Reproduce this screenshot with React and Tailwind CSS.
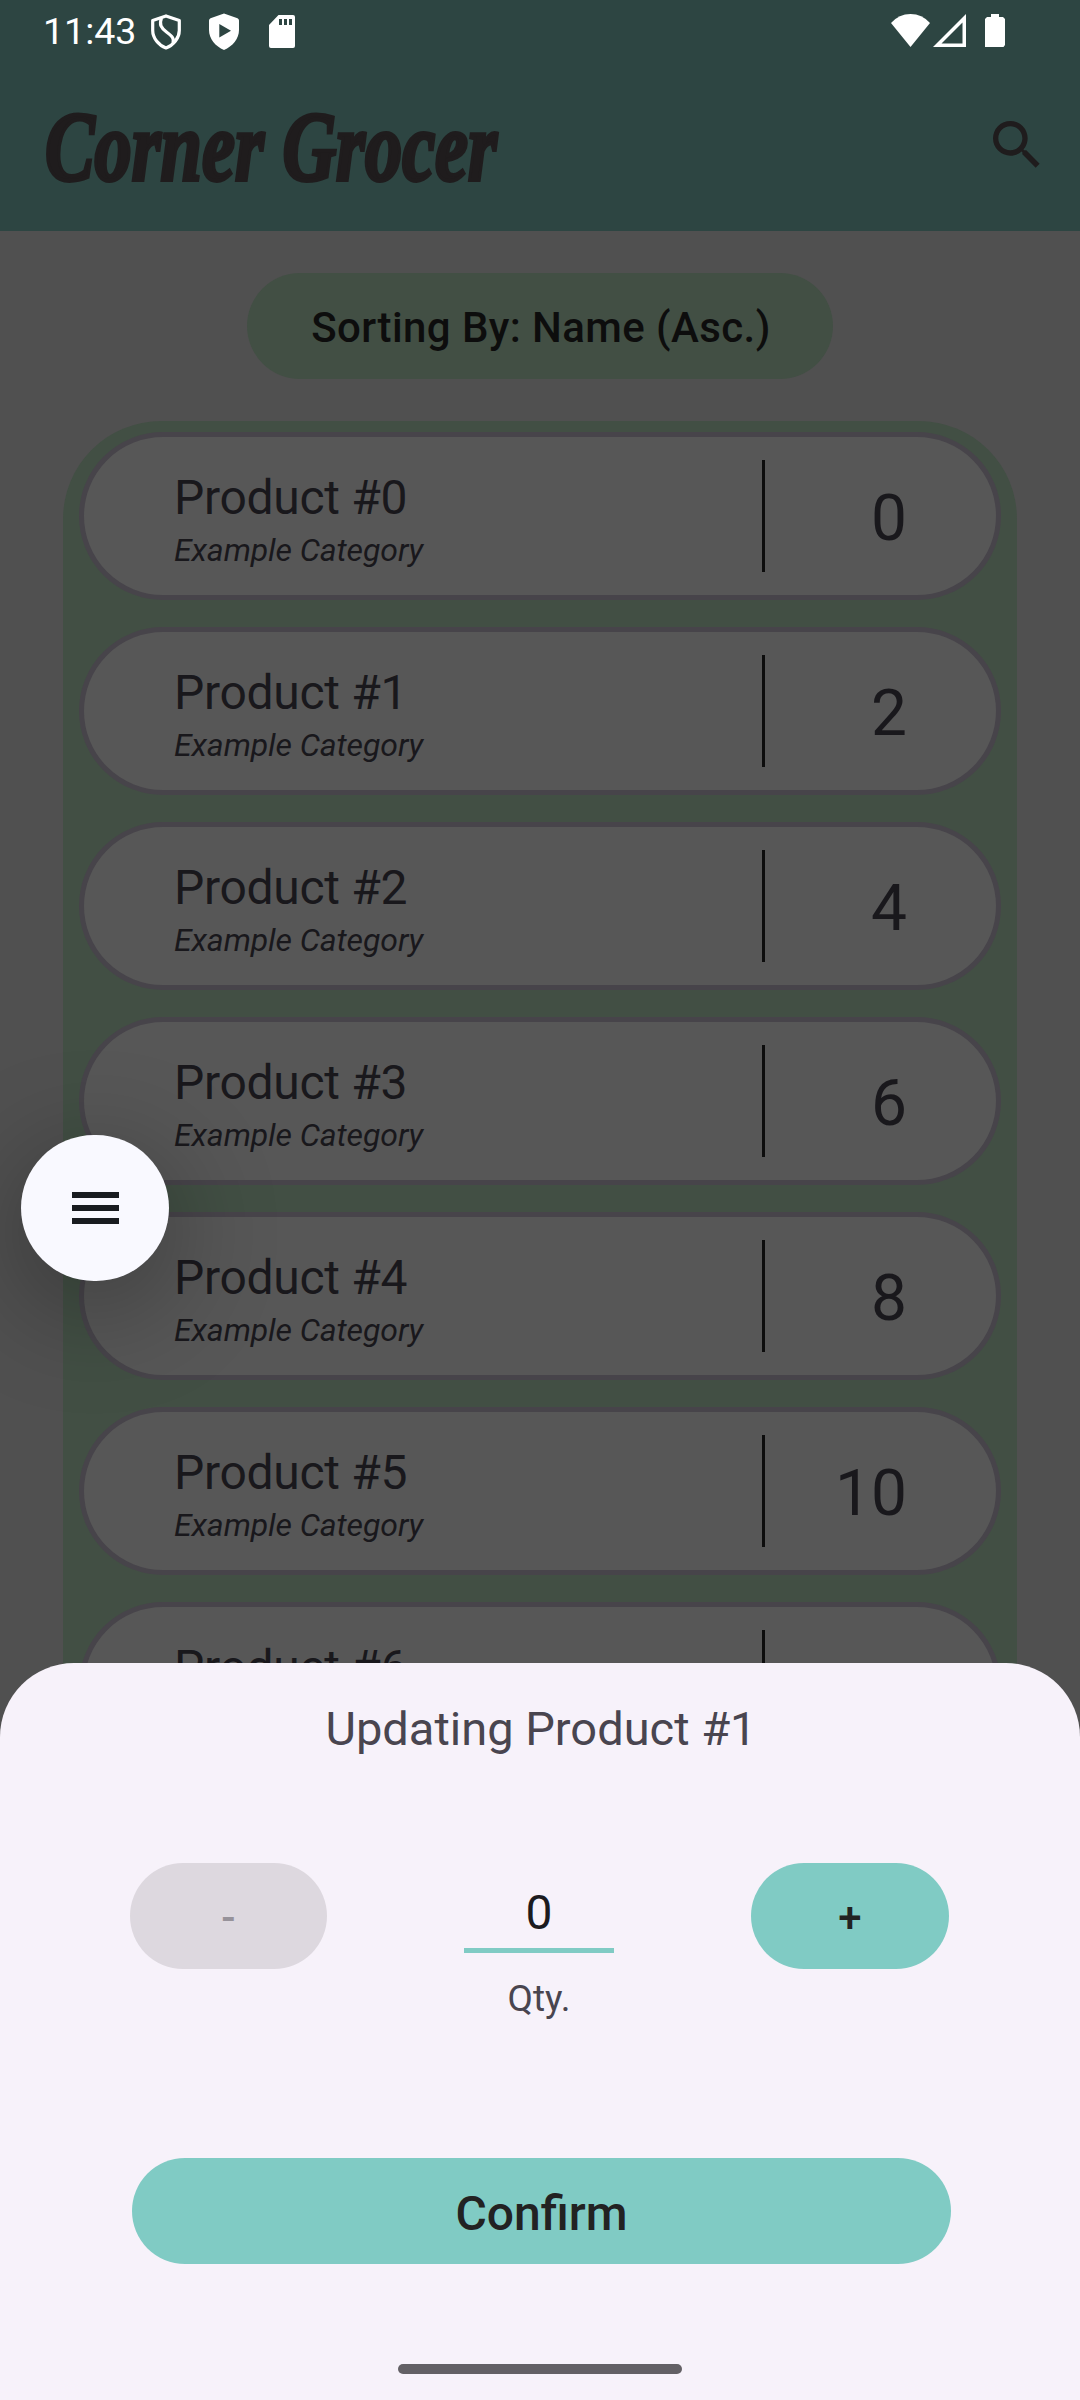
const PRODUCTS = [0, 1, 2, 3, 4, 5, 6];

function ShieldOutline() {
  return (
    <svg className="ml-[16px] mt-[14px] h-[36px] w-[30px]" viewBox="0 0 30 36" fill="none" stroke="#fff">
      <path d="M15 1.900 28.300 6.400V16.500C28.300 24 22.500 31.300 15 34 7.500 31.300 1.700 24 1.700 16.500V6.400Z" strokeWidth="3.200" strokeLinejoin="round" />
      <path d="M10.500 4C8 10.500 10 14 15.500 18 21 22 23.500 24.500 22 29" strokeWidth="3.200" />
    </svg>
  );
}

function ShieldPlay() {
  return (
    <svg className="ml-[28px] mt-[13px] h-[37px] w-[30px]" viewBox="0 0 30 37">
      <path fillRule="evenodd" fill="#fff" d="M15 .500 28.500 5.300Q30 6 30 7.500V17C30 25.500 23.500 33.500 15 37 6.500 33.500 0 25.500 0 17V7.500Q0 6 1.500 5.300ZM10.300 11V24.500L22 17.700Z" />
    </svg>
  );
}

function SdCard() {
  return (
    <svg className="ml-[30px] mt-[15px] h-[33px] w-[26px]" viewBox="0 0 26 33">
      <path fillRule="evenodd" fill="#fff" d="M9.500 0H24Q26 0 26 2V31Q26 33 24 33H2Q0 33 0 31V10ZM10 4V10H13V4ZM15 4V10H18V4ZM20 4V10H23V4Z" />
    </svg>
  );
}

function StatusBar() {
  return (
    <div className="flex h-[60px] items-start pl-[43px] pr-[75px] text-white">
      <span className="mt-[9px] w-[92px] whitespace-nowrap text-[37.500px] leading-[44px]">11:43</span>
      <ShieldOutline />
      <ShieldPlay />
      <SdCard />
      <svg className="ml-auto mt-[14px] h-[33px] w-[39px]" viewBox="0 0 39 33">
        <path fill="#fff" d="M0 9Q8 0 19.500 0T39 9L19.500 33Z" />
      </svg>
      <svg className="ml-[3px] mt-[14px] h-[33px] w-[33px]" viewBox="0 0 33 33">
        <path fillRule="evenodd" fill="#fff" d="M33 0V33H0ZM29.500 8.500V29.500H8.500Z" />
      </svg>
      <svg className="ml-[19px] mt-[14px] h-[33px] w-[20px]" viewBox="0 0 20 33">
        <path fill="#fff" d="M6 0H14V3H18L20 5V31L18.500 33H0V5L2 3H6Z" />
      </svg>
    </div>
  );
}

function Header() {
  return (
    <header className="h-[231px] bg-[#2d4542]">
      <StatusBar />
      <div className="flex items-start justify-between pl-[45px] pr-[31px]">
        <h1 className="mt-[29px] w-[640px] origin-left scale-x-[0.743] whitespace-nowrap font-['Liberation_Serif',serif] text-[100px] font-bold italic leading-[116px] text-[#1f1c1d] [-webkit-text-stroke:4px_#1f1c1d]">
          Corner Grocer
        </h1>
        <svg className="mt-[53px] h-[64px] w-[64px]" viewBox="0 0 24 24" fill="#1f1c1d">
          <path d="M15.500 14h-.79l-.28-.27A6.470 6.470 0 0 0 16 9.500 6.500 6.500 0 1 0 9.500 16c1.610 0 3.090-.59 4.230-1.570l.27.28v.79l5 4.990L20.490 19l-4.990-5zm-6 0C7.010 14 5 11.990 5 9.500S7.010 5 9.500 5 14 7.010 14 9.500 11.990 14 9.500 14z" />
        </svg>
      </div>
    </header>
  );
}

function ProductRow({ index }) {
  return (
    <li className="flex h-[168px] shrink-0 items-start rounded-full border-[5px] border-[#47444a] bg-[#575757] text-[#19181c]">
      <div className="ml-[88px] mt-[33px] w-[590px] whitespace-nowrap pl-[2px]">
        <div className="text-[48px] leading-[56px] tracking-[-0.3px]">Product #{index}</div>
        <div className="mt-[4px] text-[32px] italic leading-[40px] tracking-[-0.1px]">Example Category</div>
      </div>
      <div className="mt-[23px] h-[112px] w-[3px] bg-[#0d0d0d]" />
      <div className="mt-[42px] w-[142px] text-right text-[64px] leading-[80px]">{index * 2}</div>
    </li>
  );
}

function QuantityButton({ label, className }) {
  return (
    <button className={"h-[106px] rounded-full pt-[4px] text-[42px] font-medium leading-none " + className}>{label}</button>
  );
}

function UpdateSheet() {
  return (
    <section className="absolute inset-x-0 top-[1663px] flex h-[737px] flex-col items-center rounded-t-[74px] bg-[#f7f2fa]">
      <h2 className="mt-[36px] pl-[2px] text-[47px] leading-[60px] text-[#49454f]">Updating Product #1</h2>
      <div className="-ml-[1px] mt-[104px] flex h-[160px] w-[819px] items-start justify-between">
        <QuantityButton label="-" className="w-[197px] bg-[#ddd8df] text-[#96929a]" />
        <div className="flex w-[150px] flex-col items-center">
          <div className="mt-[20px] h-[65px] text-[48px] leading-[60px] text-[#1c1b1f]">0</div>
          <div className="h-[5px] w-full bg-[#80cbc4]" />
          <div className="mt-[24px] text-[37px] leading-[44px] text-[#49454f]">Qty.</div>
        </div>
        <QuantityButton label="+" className="w-[198px] bg-[#80cbc4] text-[#222222]" />
      </div>
      <button className="ml-[3px] mt-[135px] h-[106px] w-[819px] rounded-full bg-[#80cbc4] pt-[5px] text-[48px] font-medium leading-[60px] text-[#222222]">
        Confirm
      </button>
      <div className="mt-[100px] h-[10px] w-[284px] rounded-full bg-[#636065]" />
    </section>
  );
}

export default function App() {
  return (
    <div className="relative h-[2400px] w-[1080px] overflow-hidden bg-[#505050] font-[Roboto,sans-serif]">
      <Header />
      <main className="flex h-[2169px] flex-col items-center overflow-hidden">
        <div className="mt-[42px] flex h-[106px] w-[586px] shrink-0 items-center justify-center rounded-full bg-[#424f44] pl-[2px] pt-[3px] text-[42px] font-medium tracking-[0.4px] text-[#0d0d0d]">
          Sorting By: Name (Asc.)
        </div>
        <ul className="mt-[42px] flex h-[1700px] w-[954px] shrink-0 flex-col gap-[27px] rounded-t-[98px] bg-[#424f44] px-[16px] pt-[11px]">
          {PRODUCTS.map((index) => (
            <ProductRow key={index} index={index} />
          ))}
        </ul>
      </main>
      <button className="absolute left-[21px] top-[1135px] flex h-[146px] w-[148px] items-center justify-center rounded-full bg-[#f9f9ff] shadow-[0_24px_100px_12px_rgba(0,0,0,0.25)]">
        <span className="flex w-[47px] flex-col gap-[7px]">
          <span className="h-[6px] bg-[#191c20]" />
          <span className="h-[6px] bg-[#191c20]" />
          <span className="h-[6px] bg-[#191c20]" />
        </span>
      </button>
      <UpdateSheet />
    </div>
  );
}
